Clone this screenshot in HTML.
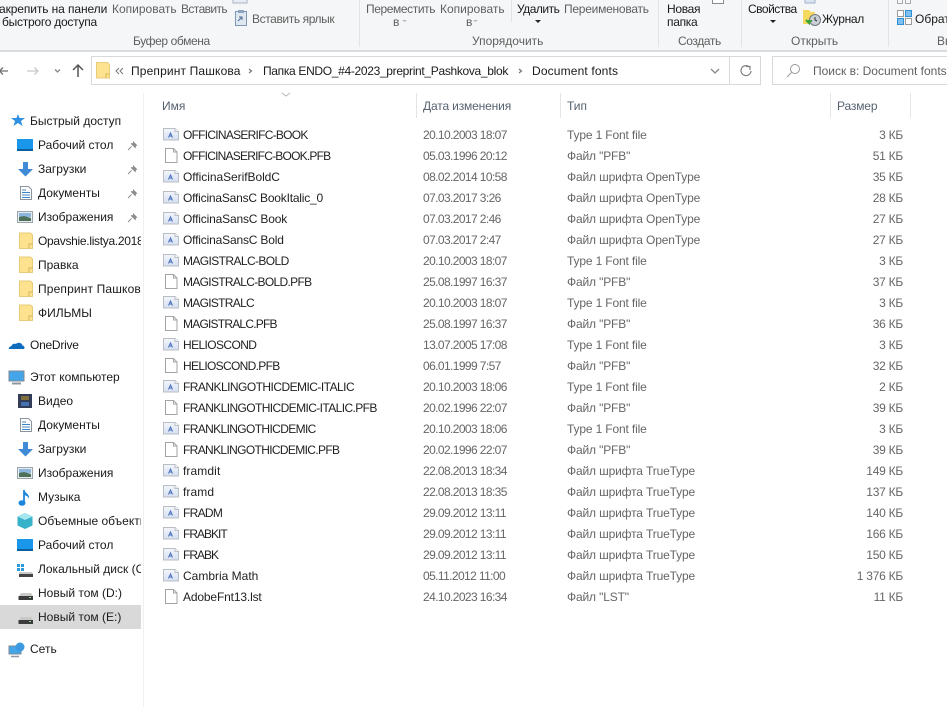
<!DOCTYPE html>
<html lang="ru"><head><meta charset="utf-8"><title>Document fonts</title>
<style>
html,body{margin:0;padding:0;width:947px;height:707px;overflow:hidden;background:#fff}
body{font-family:"Liberation Sans","Noto Sans CJK SC",sans-serif;font-size:12px;color:#1a1a1a;position:relative}
.t{position:absolute;white-space:nowrap;line-height:16px;height:16px}
.g{color:#5f5f5f}.h{color:#566270}
.b{position:absolute}
svg{position:absolute;left:0;top:0}
.clip{overflow:hidden}
.row{position:absolute;left:0;width:947px;height:16px;line-height:16px;white-space:nowrap}
.row span{position:absolute;top:0}
.row span:nth-child(1){left:183px;color:#1f1f1f}
.row span:nth-child(2){left:423px;color:#666;letter-spacing:-.6px}
.row span:nth-child(3){left:567px;color:#666;letter-spacing:-.15px}
.row span:nth-child(4){right:44px;color:#666;letter-spacing:-.25px}
</style></head><body>
<div class="b" style="left:0;top:0;width:947px;height:50px;background:#f5f6f7"></div>
<div class="b" style="left:0;top:50px;width:947px;height:2px;background:#dadbdc"></div>
<div class="b" style="left:91px;top:56px;width:670px;height:29px;background:#fff;border:1px solid #d9d9d9;box-sizing:border-box"></div>
<div class="b" style="left:729px;top:56px;width:1px;height:29px;background:#d9d9d9"></div>
<div class="b" style="left:772px;top:56px;width:175px;height:29px;background:#fff;border:1px solid #d9d9d9;border-right:0;box-sizing:border-box"></div>
<div class="b" style="left:143px;top:93px;width:1px;height:614px;background:#f0f0f0"></div>
<div class="b" style="left:0;top:605px;width:141px;height:24px;background:#d9d9d9"></div>
<div class="b" style="left:416px;top:93px;width:1px;height:25px;background:#e5e5e5"></div>
<div class="b" style="left:560px;top:93px;width:1px;height:25px;background:#e5e5e5"></div>
<div class="b" style="left:830px;top:93px;width:1px;height:25px;background:#e5e5e5"></div>
<div class="b" style="left:910px;top:93px;width:1px;height:25px;background:#e5e5e5"></div>
<div class="b" style="left:359px;top:0;width:1px;height:47px;background:#e2e3e4"></div>
<div class="b" style="left:658px;top:0;width:1px;height:47px;background:#e2e3e4"></div>
<div class="b" style="left:741px;top:0;width:1px;height:47px;background:#e2e3e4"></div>
<div class="b" style="left:888px;top:0;width:1px;height:47px;background:#e2e3e4"></div>
<div class="b" style="left:511px;top:0;width:1px;height:22px;background:#e2e3e4"></div>

<svg width="947" height="707" viewBox="0 0 947 707">
<defs>
<linearGradient id="ag" x1="0" y1="0" x2="0" y2="1"><stop offset="0" stop-color="#f3f6fb"/><stop offset="1" stop-color="#d5e0f2"/></linearGradient>
<g id="a"><path d="M163.500 128.500H175l3.500 3v8.500h-15z" fill="url(#ag)" stroke="#b9bdc4"/><path d="M175 128.500V131.500h3.500" fill="#fff" stroke="#b9bdc4"/><path d="M168.500 137.500l2-4.500 2 4.500M169.500 136h2" fill="none" stroke="#4a6fbb"/></g>
<g id="p"><path d="M165.500 148.500h8l3.500 3.500v10.500h-11.500z" fill="#fff" stroke="#a3a3a3"/><path d="M173.500 148.500V152h3.500" fill="none" stroke="#a3a3a3"/></g>
<g id="f"><path d="M19.500 233h11l2 2v13.500h-13z" fill="#fde28f" stroke="#e8cb7a"/><path d="M29 248v-4h3.500" fill="none" stroke="#d9b45a"/></g>
<g id="desk"><rect x="17" y="139" width="16" height="12" fill="#1a96ea"/><rect x="17" y="149" width="16" height="2" fill="#0d5f9e"/></g>
<g id="dl"><path d="M23 162h5v7h5l-7.500 7.500L18 169h5z" fill="#3f8ad6"/></g>
<g id="doc"><path d="M20.500 186.500h8l3 3v10h-11z" fill="#fff" stroke="#8b949e"/><path d="M22 190h4M22 192.500h8M22 195h8M22 197.500h8" stroke="#3d85c6"/></g>
<g id="img"><rect x="17.500" y="211.500" width="15" height="11" fill="#e8edf2" stroke="#9aa2aa"/><path d="M19 213h12v4H19z" fill="#8db5dd"/><path d="M19 217l5-1 7 2v3H19z" fill="#4e7058"/></g>
<g id="pin"><path d="M133 141l4.500 4.500-1.500.5-.5 2.500-5-5 2.500-.5z" fill="#8d8d8d"/><path d="M131.500 146.500L128 150" stroke="#8d8d8d"/></g>
<g id="hd"><path d="M19 596l2-3h10l2 3z" fill="#c9c9c9"/><rect x="18.500" y="596" width="14.500" height="4" fill="#3c3c3c"/><rect x="29" y="597" width="2" height="1" fill="#8fd18f"/></g>
</defs>

<path d="M233 0v3h14V0" fill="#e8edf3" stroke="#a8b4c4"/>
<rect x="235.500" y="11.500" width="11" height="14" fill="#dfe7f1" stroke="#7f98b8"/><rect x="238" y="10" width="6" height="3" fill="#8ea3bd"/><path d="M238 21l4-4M239 17h3v3" stroke="#4f6f99" fill="none"/>
<path d="M712.500 0v3.500h11V0" fill="#fff" stroke="#8a8a8a"/>
<path d="M805 0v3h10V0" fill="#dbe5f2" stroke="#9fb2ca"/>
<path d="M803 10h6l2 2h4v12h-12z" fill="#f5d85e"/><circle cx="815" cy="20" r="5.500" fill="#c9cfd4" stroke="#6f7a80"/><path d="M815 17v3l2 1" stroke="#333" fill="none"/><path d="M806 20l3 3 0-2h3" fill="none" stroke="#3aa53a" stroke-width="2"/>
<path d="M897.500 0v3.500h5V0M905.500 0v3.500h5V0" fill="none" stroke="#aaa"/>
<rect x="897.500" y="10.500" width="6" height="6" fill="#fff" stroke="#9a9a9a"/><rect x="905.500" y="10.500" width="6" height="6" fill="#7fc0ef" stroke="#2d8fd8"/><rect x="897.500" y="18.500" width="6" height="6" fill="#7fc0ef" stroke="#2d8fd8"/><rect x="905.500" y="18.500" width="6" height="6" fill="#fff" stroke="#9a9a9a"/>
<path d="M402 20h5l-2.500 2z" fill="#bbb"/><path d="M473 20h5l-2.500 2z" fill="#bbb"/>
<path d="M535 20h6l-3 3z" fill="#222"/><path d="M770 20h6l-3 3z" fill="#222"/>

<path d="M8 71H0M3 67.500L-.5 71 3 74.500" fill="none" stroke="#6d6d6d" stroke-width="1.300"/>
<path d="M27 71h11M34.500 67.500L38 71l-3.500 3.500" fill="none" stroke="#c8c8c8" stroke-width="1.300"/>
<path d="M55 69.500l2.500 2.500 2.500-2.500" fill="none" stroke="#888" stroke-width="1.300"/>
<path d="M78 77V65M73 70l5-5 5 5" fill="none" stroke="#555" stroke-width="1.500"/>
<path d="M96.500 62.500h11l2 2v13.500h-13z" fill="#fde28f" stroke="#e8cb7a"/><path d="M106 78v-4h3.500" fill="none" stroke="#d9b45a"/>
<path d="M119 68l-3 3 3 3M123 68l-3 3 3 3" fill="none" stroke="#777"/>
<path d="M249 69l2.500 2-2.500 2" fill="none" stroke="#777" stroke-width="1.200"/>
<path d="M519 69l2.500 2-2.500 2" fill="none" stroke="#777" stroke-width="1.200"/>
<path d="M711 69l4 4 4-4" fill="none" stroke="#888" stroke-width="1.300"/>
<path d="M749.500 67a5 5 0 1 0 1.500 4M746 66.500h4V70" fill="none" stroke="#808080" stroke-width="1.200"/>
<circle cx="795" cy="69" r="4.500" fill="none" stroke="#999"/><path d="M791.500 72.500L787 77" stroke="#999"/>
<path d="M282 93l4 3 4-3" fill="none" stroke="#b8b8b8"/>

<path d="M18 114l1.500 4h5.500l-4 3 1.500 5-4.500-3-4.500 3 1.500-5-4-3h5.500z" fill="#2f8fe0"/>
<use href="#desk"/><use href="#dl"/><use href="#doc"/><use href="#img"/>
<use href="#pin"/><use href="#pin" y="24"/><use href="#pin" y="48"/><use href="#pin" y="72"/>
<use href="#f"/><use href="#f" y="24"/><use href="#f" y="48"/><use href="#f" y="72"/>
<path d="M9 349h14.500c1.500 0 1.500-3-1-3.500-1-3-4.500-3.500-6.500-1.500-2.500-1-4 .5-4.500 2-2 .3-3 2.500-2.500 3z" fill="#0f6cbd"/>
<rect x="9" y="371" width="15" height="10" fill="#45a5ea" stroke="#7d8a96"/><path d="M12 383.500h9" stroke="#8d98a2" stroke-width="2"/>
<rect x="18" y="394" width="14" height="14" fill="#333c57"/><rect x="21" y="396" width="8" height="4" fill="#7f6f3c"/><rect x="21" y="402" width="8" height="4" fill="#4472b0"/>
<use href="#doc" y="232"/><use href="#dl" y="280"/><use href="#img" y="256"/>
<path d="M24 490v13" stroke="#1c86dc" stroke-width="1.800"/><ellipse cx="22" cy="503" rx="3.500" ry="2.800" fill="#1c86dc"/><path d="M24 490c1 3 6 4 5 9-1-3-3-3.500-5-4z" fill="#1c86dc"/>
<path d="M25 513l7.500 3.500v9L25 529l-7.500-3.500v-9z" fill="#38b2c9"/><path d="M25 513l7.500 3.500-7.500 3.500-7.500-3.500z" fill="#a6e6ef"/>
<use href="#desk" y="400"/>
<rect x="17" y="564" width="3" height="3" fill="#2a9ad9"/><rect x="21" y="564" width="3" height="3" fill="#2a9ad9"/><rect x="17" y="568" width="3" height="3" fill="#2a9ad9"/><rect x="21" y="568" width="3" height="3" fill="#2a9ad9"/>
<path d="M19 572h13l1 2H19z" fill="#c9c9c9"/><rect x="19" y="574" width="14" height="3" fill="#444"/>
<use href="#hd"/><use href="#hd" y="24"/>
<rect x="9" y="646" width="12" height="8" fill="#45a5ea" stroke="#7d8a96"/><path d="M11 656.500h8" stroke="#8d98a2" stroke-width="1.500"/><circle cx="20" cy="647" r="4.500" fill="#3d9ae0"/>

<use href="#a"/><use href="#p"/><use href="#a" y="42"/><use href="#a" y="63"/><use href="#a" y="84"/><use href="#a" y="105"/><use href="#a" y="126"/>
<use href="#p" y="126"/><use href="#a" y="168"/><use href="#p" y="168"/><use href="#a" y="210"/><use href="#p" y="210"/><use href="#a" y="252"/><use href="#p" y="252"/><use href="#a" y="294"/><use href="#p" y="294"/>
<use href="#a" y="336"/><use href="#a" y="357"/><use href="#a" y="378"/><use href="#a" y="399"/><use href="#a" y="420"/><use href="#a" y="441"/><use href="#p" y="441"/>
</svg>

<span class="t" style="left:-1px;top:1px;letter-spacing:-.1px">акрепить на панели</span>
<span class="t" style="left:2px;top:14px;letter-spacing:-.25px">быстрого доступа</span>
<span class="t g" style="left:112px;top:1px">Копировать</span>
<span class="t g" style="left:181px;top:1px;letter-spacing:-.6px">Вставить</span>
<span class="t g" style="left:252px;top:11px;letter-spacing:-.4px">Вставить ярлык</span>
<span class="t g" style="left:133px;top:33px;letter-spacing:-.4px">Буфер обмена</span>
<span class="t g" style="left:366px;top:1px;letter-spacing:-.4px">Переместить</span>
<span class="t g" style="left:393px;top:14px">в</span>
<span class="t g" style="left:440px;top:1px">Копировать</span>
<span class="t g" style="left:466px;top:14px">в</span>
<span class="t" style="left:517px;top:1px;letter-spacing:-.5px">Удалить</span>
<span class="t g" style="left:564px;top:1px;letter-spacing:-.25px">Переименовать</span>
<span class="t g" style="left:472px;top:33px">Упорядочить</span>
<span class="t" style="left:667px;top:1px;letter-spacing:-.3px">Новая</span>
<span class="t" style="left:667px;top:14px;letter-spacing:-.3px">папка</span>
<span class="t g" style="left:678px;top:33px;letter-spacing:-.4px">Создать</span>
<span class="t" style="left:748px;top:1px;letter-spacing:-.5px">Свойства</span>
<span class="t" style="left:822px;top:11px;letter-spacing:-.3px">Журнал</span>
<span class="t g" style="left:791px;top:33px">Открыть</span>
<span class="t" style="left:915px;top:11px">Обрат</span>
<span class="t g" style="left:937px;top:33px">Вы</span>

<span class="t" style="left:131px;top:63px;letter-spacing:.15px">Препринт Пашкова</span>
<span class="t" style="left:263px;top:63px;letter-spacing:-.32px">Папка ENDO_#4-2023_preprint_Pashkova_blok</span>
<span class="t" style="left:532px;top:63px;letter-spacing:.15px">Document fonts</span>
<span class="t g" style="left:813px;top:63px">Поиск в: Document fonts</span>

<span class="t h" style="left:162px;top:98px">Имя</span>
<span class="t h" style="left:423px;top:98px;letter-spacing:-.15px">Дата изменения</span>
<span class="t h" style="left:567px;top:98px">Тип</span>
<span class="t h" style="left:837px;top:98px;letter-spacing:-.15px">Размер</span>

<span class="t" style="left:30px;top:113px">Быстрый доступ</span>
<span class="t" style="left:38px;top:137px">Рабочий стол</span>
<span class="t" style="left:38px;top:161px">Загрузки</span>
<span class="t" style="left:38px;top:185px">Документы</span>
<span class="t" style="left:38px;top:209px">Изображения</span>
<span class="t clip" style="left:38px;top:233px;width:103px;letter-spacing:-.3px">Opavshie.listya.2018</span>
<span class="t" style="left:38px;top:257px">Правка</span>
<span class="t clip" style="left:38px;top:281px;width:103px;letter-spacing:.15px">Препринт Пашкова</span>
<span class="t" style="left:38px;top:305px">ФИЛЬМЫ</span>
<span class="t" style="left:30px;top:337px;letter-spacing:-.25px">OneDrive</span>
<span class="t" style="left:30px;top:369px">Этот компьютер</span>
<span class="t" style="left:38px;top:393px">Видео</span>
<span class="t" style="left:38px;top:417px">Документы</span>
<span class="t" style="left:38px;top:441px">Загрузки</span>
<span class="t" style="left:38px;top:465px">Изображения</span>
<span class="t" style="left:38px;top:489px">Музыка</span>
<span class="t clip" style="left:38px;top:513px;width:103px">Объемные объекты</span>
<span class="t" style="left:38px;top:537px">Рабочий стол</span>
<span class="t clip" style="left:38px;top:561px;width:103px">Локальный диск (C:)</span>
<span class="t" style="left:38px;top:585px">Новый том (D:)</span>
<span class="t" style="left:38px;top:609px">Новый том (E:)</span>
<span class="t" style="left:30px;top:641px">Сеть</span>

<div class="row" style="top:127px"><span style="letter-spacing:-.74px">OFFICINASERIFC-BOOK</span><span>20.10.2003 18:07</span><span>Type 1 Font file</span><span>3 КБ</span></div>
<div class="row" style="top:148px"><span style="letter-spacing:-.78px">OFFICINASERIFC-BOOK.PFB</span><span>05.03.1996 20:12</span><span>Файл "PFB"</span><span>51 КБ</span></div>
<div class="row" style="top:169px"><span style="letter-spacing:-.05px">OfficinaSerifBoldC</span><span>08.02.2014 10:58</span><span>Файл шрифта OpenType</span><span>35 КБ</span></div>
<div class="row" style="top:190px"><span style="letter-spacing:-.2px">OfficinaSansC BookItalic_0</span><span>07.03.2017 3:26</span><span>Файл шрифта OpenType</span><span>28 КБ</span></div>
<div class="row" style="top:211px"><span style="letter-spacing:-.17px">OfficinaSansC Book</span><span>07.03.2017 2:46</span><span>Файл шрифта OpenType</span><span>27 КБ</span></div>
<div class="row" style="top:232px"><span style="letter-spacing:-.17px">OfficinaSansC Bold</span><span>07.03.2017 2:47</span><span>Файл шрифта OpenType</span><span>27 КБ</span></div>
<div class="row" style="top:253px"><span style="letter-spacing:-.6px">MAGISTRALC-BOLD</span><span>20.10.2003 18:07</span><span>Type 1 Font file</span><span>3 КБ</span></div>
<div class="row" style="top:274px"><span style="letter-spacing:-.68px">MAGISTRALC-BOLD.PFB</span><span>25.08.1997 16:37</span><span>Файл "PFB"</span><span>37 КБ</span></div>
<div class="row" style="top:295px"><span style="letter-spacing:-.7px">MAGISTRALC</span><span>20.10.2003 18:07</span><span>Type 1 Font file</span><span>3 КБ</span></div>
<div class="row" style="top:316px"><span style="letter-spacing:-.78px">MAGISTRALC.PFB</span><span>25.08.1997 16:37</span><span>Файл "PFB"</span><span>36 КБ</span></div>
<div class="row" style="top:337px"><span style="letter-spacing:-.6px">HELIOSCOND</span><span>13.07.2005 17:08</span><span>Type 1 Font file</span><span>3 КБ</span></div>
<div class="row" style="top:358px"><span style="letter-spacing:-.67px">HELIOSCOND.PFB</span><span>06.01.1999 7:57</span><span>Файл "PFB"</span><span>32 КБ</span></div>
<div class="row" style="top:379px"><span style="letter-spacing:-.54px">FRANKLINGOTHICDEMIC-ITALIC</span><span>20.10.2003 18:06</span><span>Type 1 Font file</span><span>2 КБ</span></div>
<div class="row" style="top:400px"><span style="letter-spacing:-.6px">FRANKLINGOTHICDEMIC-ITALIC.PFB</span><span>20.02.1996 22:07</span><span>Файл "PFB"</span><span>39 КБ</span></div>
<div class="row" style="top:421px"><span style="letter-spacing:-.63px">FRANKLINGOTHICDEMIC</span><span>20.10.2003 18:06</span><span>Type 1 Font file</span><span>3 КБ</span></div>
<div class="row" style="top:442px"><span style="letter-spacing:-.65px">FRANKLINGOTHICDEMIC.PFB</span><span>20.02.1996 22:07</span><span>Файл "PFB"</span><span>39 КБ</span></div>
<div class="row" style="top:463px"><span style="letter-spacing:.1px">framdit</span><span>22.08.2013 18:34</span><span>Файл шрифта TrueType</span><span>149 КБ</span></div>
<div class="row" style="top:484px"><span style="letter-spacing:.1px">framd</span><span>22.08.2013 18:35</span><span>Файл шрифта TrueType</span><span>137 КБ</span></div>
<div class="row" style="top:505px"><span style="letter-spacing:-.7px">FRADM</span><span>29.09.2012 13:11</span><span>Файл шрифта TrueType</span><span>140 КБ</span></div>
<div class="row" style="top:526px"><span style="letter-spacing:-1px">FRABKIT</span><span>29.09.2012 13:11</span><span>Файл шрифта TrueType</span><span>166 КБ</span></div>
<div class="row" style="top:547px"><span style="letter-spacing:-1px">FRABK</span><span>29.09.2012 13:11</span><span>Файл шрифта TrueType</span><span>150 КБ</span></div>
<div class="row" style="top:568px"><span>Cambria Math</span><span>05.11.2012 11:00</span><span>Файл шрифта TrueType</span><span>1 376 КБ</span></div>
<div class="row" style="top:589px"><span style="letter-spacing:-.15px">AdobeFnt13.lst</span><span>24.10.2023 16:34</span><span>Файл "LST"</span><span>11 КБ</span></div>
</body></html>
